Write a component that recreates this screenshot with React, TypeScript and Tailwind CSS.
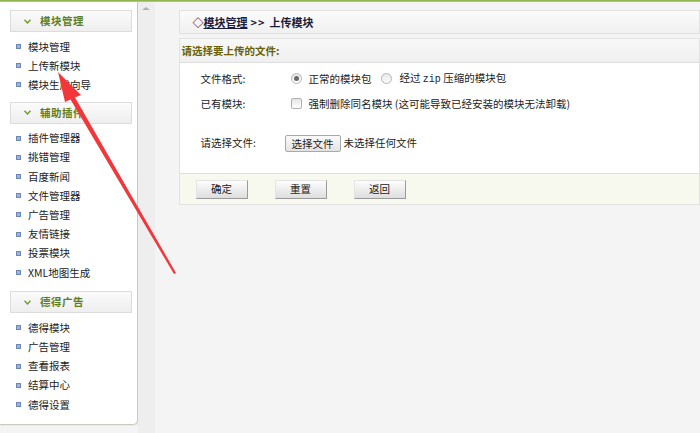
import React from "react";

const FONT = { fontFamily: '"SimSun", "Noto Sans CJK SC", sans-serif' };

const groups = [
  { title: "模块管理", items: ["模块管理", "上传新模块", "模块生成向导"], pb: "pb-[7px]" },
  {
    title: "辅助插件",
    items: ["插件管理器", "挑错管理", "百度新闻", "文件管理器", "广告管理", "友情链接", "投票模块", "XML地图生成"],
    pb: "pb-[9px]",
  },
  { title: "德得广告", items: ["德得模块", "广告管理", "查看报表", "结算中心", "德得设置"], pb: "pb-[6px]" },
];

function Chevron() {
  return (
    <svg width="7" height="5" viewBox="0 0 7 5" className="shrink-0">
      <path d="M0.5 0.8 L3.5 4 L6.5 0.8" fill="none" stroke="#6f9a2a" strokeWidth="1.4" />
    </svg>
  );
}

function Sidebar() {
  return (
    <div className="w-[140px] h-[423px] bg-white border-r border-b border-[#c9c9bf] rounded-br-[5px] pt-[8px] shadow-[1px_1px_1px_rgba(0,0,0,0.05)]">
      {groups.map((g) => (
        <div key={g.title}>
          <div className="ml-[10px] w-[122px] h-[22px] border border-[#dcdcdc] bg-gradient-to-b from-[#fbfbfb] to-[#eeeeee] flex items-center pl-[13px] gap-[9px]">
            <Chevron />
            <span className="text-[10.5px] font-bold text-[#5f7f24] tracking-[0.5px]">{g.title}</span>
          </div>
          <ul className={`pt-[5px] ${g.pb}`}>
            {g.items.map((it) => (
              <li key={it} className="h-[19.2px] flex items-center pl-[16px] gap-[7px] text-[10.5px] text-[#222]">
                <span className="w-[5px] h-[5px] bg-[#9db3d8] border border-[#6d88b8] shrink-0" />
                <span>{it}</span>
              </li>
            ))}
          </ul>
        </div>
      ))}
    </div>
  );
}

function Radio({ checked }: { checked?: boolean }) {
  return (
    <span className="w-[11px] h-[11px] rounded-full border border-[#b5b5b5] bg-gradient-to-b from-[#e8e8e8] to-[#fdfdfd] flex items-center justify-center shrink-0">
      {checked && <span className="w-[5px] h-[5px] rounded-full bg-[#6a6a6a]" />}
    </span>
  );
}

function Btn({ label }: { label: string }) {
  return (
    <button className="w-[52px] h-[19px] text-[10.5px] text-[#222] bg-gradient-to-b from-[#fdfdfd] to-[#dedede] border border-[#e4e4e4] border-r-[#9a9a9a] border-b-[#9a9a9a]">
      {label}
    </button>
  );
}

function Main() {
  return (
    <div className="w-[530px] ml-[24px] pt-[8px] text-[10.5px] text-[#222]">
      <div className="h-[24px] border border-[#e2e2e2] bg-gradient-to-b from-[#fbfbfb] to-[#f0f0f0] flex items-center pl-[13px] text-[11px] font-bold text-[#1b1b3a]">
        <span className="text-[#24246a]">◇</span>
        <span className="underline">模块管理</span>
        <span className="ml-[3px] tracking-[1px]">&gt;&gt;</span>
        <span className="ml-[4px]">上传模块</span>
      </div>
      <div className="mt-[4px] border border-[#e2e2e2] bg-white">
        <div className="h-[24px] bg-gradient-to-b from-[#f8f8f8] to-[#efefef] border-b border-[#dedede] flex items-center pl-[2px] text-[#6b6100] font-bold">
          请选择要上传的文件:
        </div>
        <div className="pl-[21px] pt-[7px] h-[110px]">
          <div className="h-[17px] flex items-center">
            <span className="w-[89px]">文件格式:</span>
            <span className="flex items-center gap-[7px] ml-[1px]">
              <Radio checked />
              <span>正常的模块包</span>
            </span>
            <span className="flex items-center gap-[8px] ml-[9px]">
              <Radio />
              <span>
                经过 <span style={{ fontFamily: '"Liberation Mono", monospace' }} className="text-[10px]">zip</span> 压缩的模块包
              </span>
            </span>
          </div>
          <div className="h-[17px] flex items-center mt-[8px]">
            <span className="w-[89px]">已有模块:</span>
            <span className="w-[11px] h-[11px] border border-[#b0b0b0] rounded-[2px] bg-gradient-to-b from-[#e6e6e6] to-[#fdfdfd] ml-[1px] shrink-0" />
            <span className="ml-[7px]">强制删除同名模块 (这可能导致已经安装的模块无法卸载)</span>
          </div>
          <div className="h-[18px] flex items-center mt-[22px]">
            <span className="w-[84px]">请选择文件:</span>
            <button className="w-[56px] h-[17px] border border-[#a9a9a9] rounded-[2px] bg-gradient-to-b from-[#fbfbfb] to-[#e3e3e3] text-[10.5px]">
              选择文件
            </button>
            <span className="ml-[3px]">未选择任何文件</span>
          </div>
        </div>
        <div className="h-[31px] bg-[#f8f9ee] border-t border-[#dedede] flex items-center pl-[16px] gap-[27px]">
          <Btn label="确定" />
          <Btn label="重置" />
          <Btn label="返回" />
        </div>
      </div>
    </div>
  );
}

function Arrow() {
  // annotation drawn over the page
  return (
    <svg className="absolute left-0 top-0 pointer-events-none" width="700" height="433">
      <polygon points="58,72 81,95 75,97.5 176,273 174,274 70.5,99.5 65,102" fill="#f2373a" />
    </svg>
  );
}

export default function App() {
  return (
    <div className="w-[700px] h-[433px] relative overflow-hidden bg-[#f4f4f4]" style={FONT}>
      <div className="h-[2px] bg-gradient-to-b from-[#86ad3c] to-[#b8d27e]" />
      <div className="flex">
        <Sidebar />
        <div className="w-[17px] h-[431px] bg-[#eeeeee] flex justify-center pt-[5px]">
          <span className="w-0 h-0 border-l-[4px] border-r-[4px] border-b-[3px] border-l-transparent border-r-transparent border-b-[#b0b0b0]" />
        </div>
        <Main />
      </div>
      <Arrow />
    </div>
  );
}
